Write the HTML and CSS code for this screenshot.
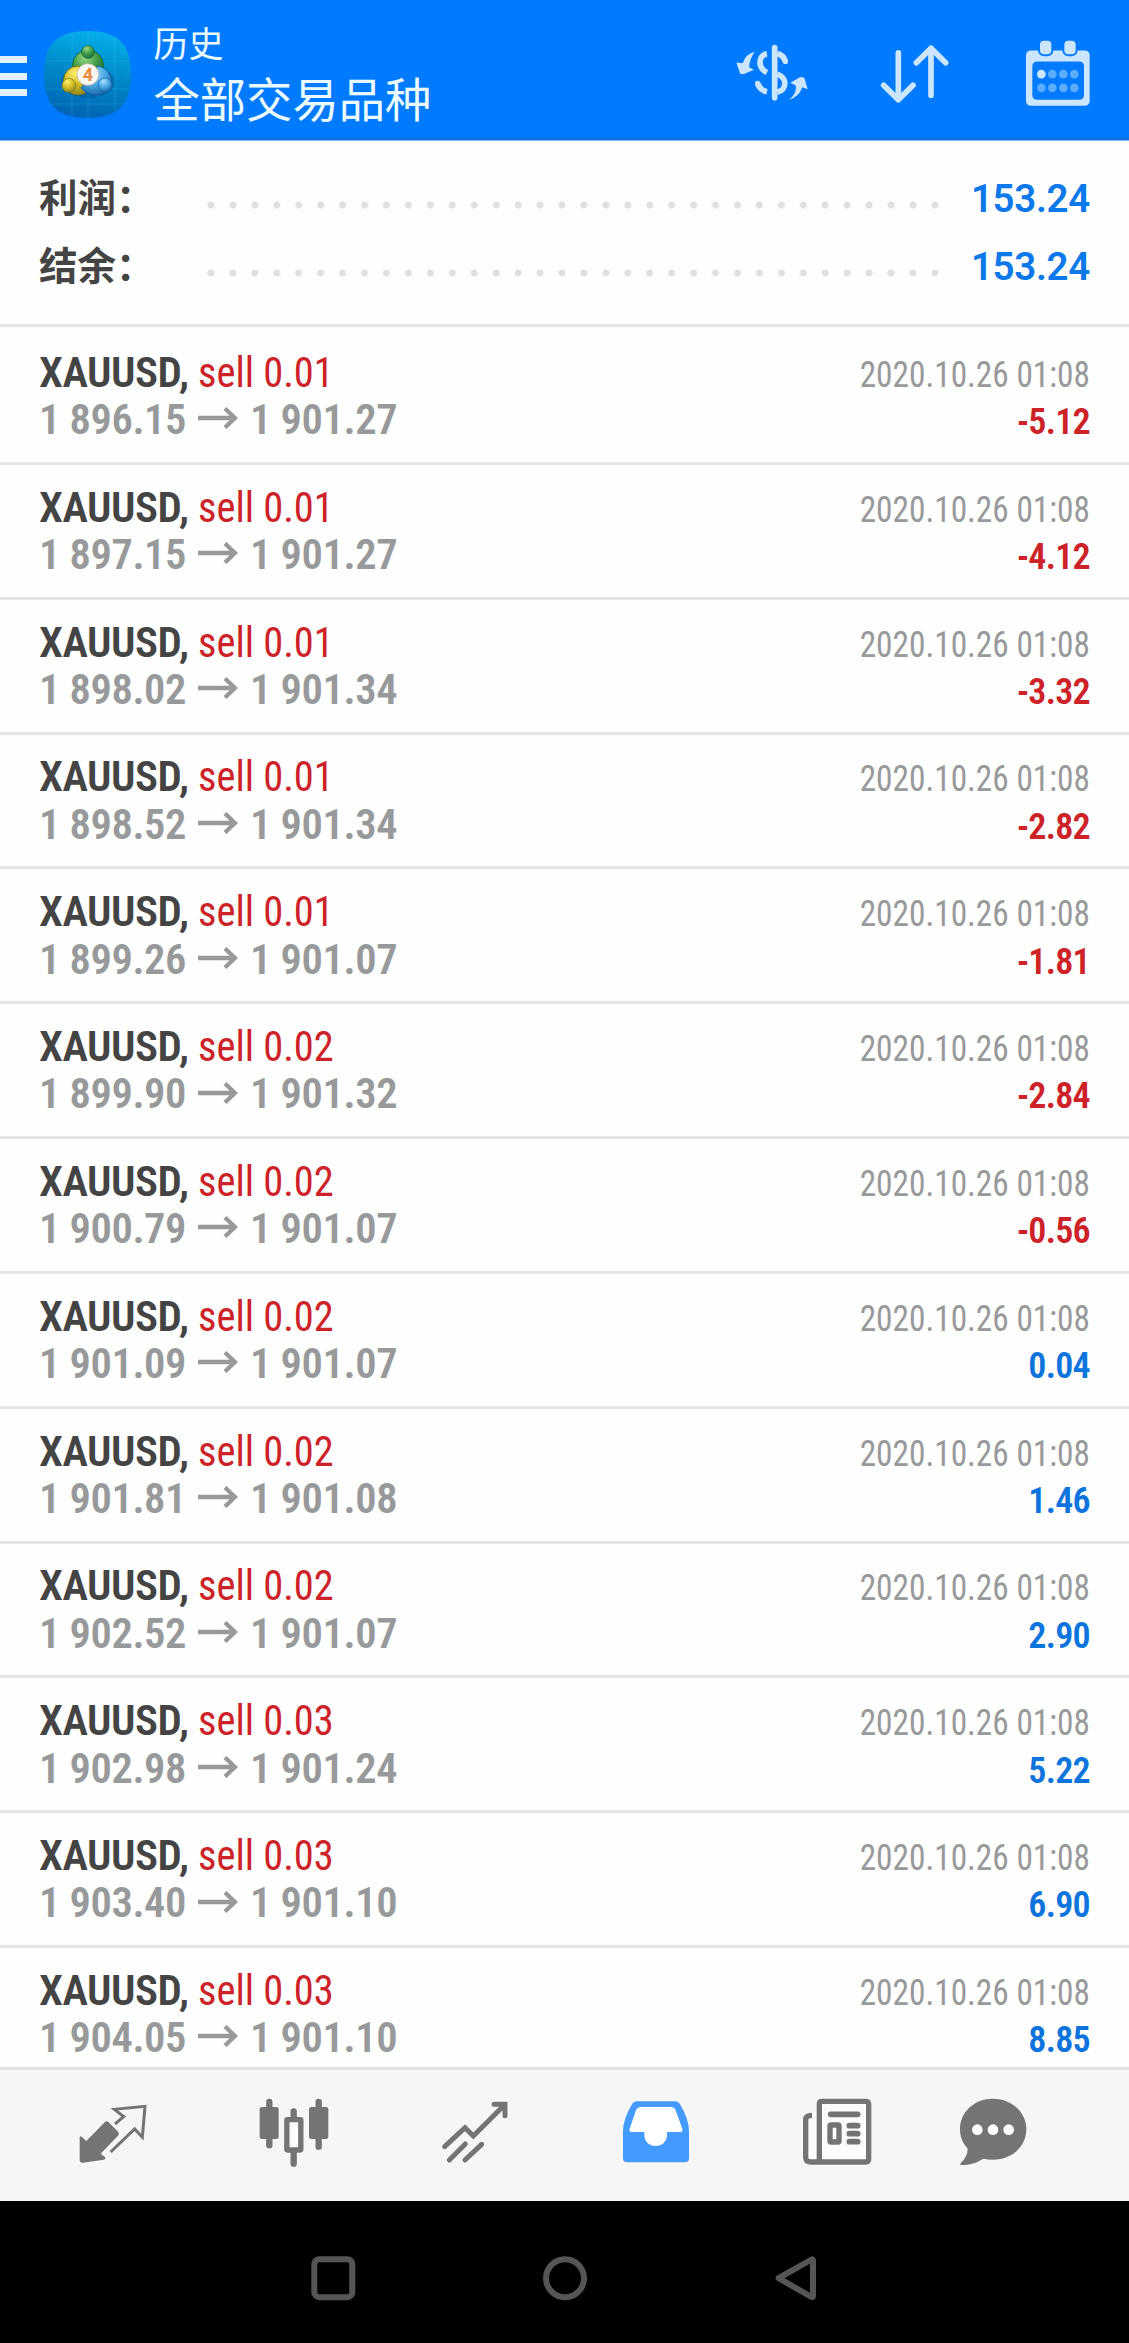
FILE: index.html
```html
<!DOCTYPE html>
<html lang="zh-CN">
<head>
<meta charset="utf-8">
<title>历史</title>
<link rel="stylesheet" href="styles.css">
</head>
<body>
<svg class="defs" aria-hidden="true">
  <symbol id="arrow" viewBox="0 0 40 22">
    <path d="M0 11H37M27 1.500l10 9.500-10 9.500" fill="none" stroke="currentColor" stroke-width="4.300"/>
  </symbol>
</svg>

<header class="topbar">
  <div class="burger"><i></i><i></i><i></i></div>
  <svg class="logo" viewBox="0 0 87 87">
    <defs>
      <linearGradient id="bg" x1="0.6" y1="0" x2="0.4" y2="1">
        <stop offset="0" stop-color="#05aeea"/><stop offset="0.5" stop-color="#0088c9"/><stop offset="1" stop-color="#0062b4"/>
      </linearGradient>
      <radialGradient id="green" cx="0.4" cy="0.25" r="0.8"><stop offset="0" stop-color="#9bd884"/><stop offset="0.5" stop-color="#3f9b45"/><stop offset="1" stop-color="#176a3a"/></radialGradient>
      <radialGradient id="gold" cx="0.4" cy="0.25" r="0.8"><stop offset="0" stop-color="#fff06d"/><stop offset="0.5" stop-color="#d1bd27"/><stop offset="1" stop-color="#87811c"/></radialGradient>
      <radialGradient id="sky" cx="0.4" cy="0.25" r="0.8"><stop offset="0" stop-color="#a8e2ff"/><stop offset="0.5" stop-color="#4aa8e2"/><stop offset="1" stop-color="#1264a8"/></radialGradient>
    </defs>
    <path d="M43.500 0C74 0 87 13 87 43.500S74 87 43.500 87 0 74 0 43.500 13 0 43.500 0Z" fill="url(#bg)"/>
    <path d="M28 2V85M44 0V87M71 6V80M2 30H85M2 58H85M5 73H81" stroke="#35b9e6" stroke-opacity=".28" stroke-width="1.200"/>
    <ellipse cx="44" cy="51" rx="27" ry="16" fill="#034a80" opacity=".35"/>
    <circle cx="44" cy="34.500" r="15.500" fill="url(#green)" stroke="#17663a"/>
    <circle cx="34" cy="49.500" r="14.500" fill="url(#gold)" stroke="#76721d"/>
    <path d="M54 35C65 37 70 48 66 57 61 67 45 66 37 57L46 46Z" fill="url(#sky)" stroke="#0f5f9d"/>
    <circle cx="44" cy="21" r="6.500" fill="url(#green)" stroke="#17663a" stroke-width=".6"/>
    <circle cx="25" cy="54.500" r="7" fill="url(#gold)" stroke="#76721d" stroke-width=".6"/>
    <circle cx="61" cy="54" r="7" fill="url(#sky)" stroke="#0f5f9d" stroke-width=".6"/>
    <circle cx="43.800" cy="43.500" r="10.800" fill="#fbf7f2" stroke="#c8b8a5" stroke-width=".8"/>
    <text x="43.800" y="50" class="logo-num">4</text>
  </svg>
  <div class="titles">
    <div class="title-small">历史</div>
    <div class="title-main">全部交易品种</div>
  </div>
  <div class="actions">
    <svg viewBox="97 112 240 215">
      <path d="M225 143V294" stroke-width="17" stroke-linecap="round"/>
      <path d="M202 162C174 166 174 205 202 218M233 161Q253 167 257 185M174 251Q181 271 202 276M233 223C263 232 263 271 233 277" stroke-width="17"/>
      <circle class="solid" cx="257" cy="185" r="8"/><circle class="solid" cx="174" cy="251" r="8"/>
      <path class="solid" d="M165 156Q139 162 129 190L110 188 121 220Q126 225 135 222L163 210 148 202Q150 178 165 156ZM268 300Q293 280 288 257L272 249 301 232Q312 230 315 237L324 268 308 262Q298 291 268 300Z"/>
    </svg>
    <svg viewBox="526 112 240 215">
      <path d="M596 159V300M552 256L596 300 640 256M694 286V145M650 189L694 145 738 189" stroke-width="17" stroke-linecap="round" stroke-linejoin="round"/>
    </svg>
    <svg viewBox="955 112 240 215">
      <path class="solid" fill-rule="evenodd" d="M995 152H1154Q1170 152 1170 168V302Q1170 318 1154 318H995Q979 318 979 302V168Q979 152 995 152ZM1013 185Q998 185 998 200V285Q998 300 1013 300H1138Q1153 300 1153 285V200Q1153 185 1138 185Z"/>
      <rect class="ring" x="1018" y="120" width="40" height="46" rx="15"/><rect class="ring" x="1091" y="120" width="40" height="46" rx="15"/>
      <circle class="solid" cx="1025" cy="223" r="13"/>
      <g class="faint"><circle cx="1058" cy="223" r="13"/><circle cx="1091" cy="223" r="13"/><circle cx="1124" cy="223" r="13"/><circle cx="1025" cy="264" r="13"/><circle cx="1058" cy="264" r="13"/><circle cx="1091" cy="264" r="13"/><circle cx="1124" cy="264" r="13"/></g>
    </svg>
  </div>
</header>

<main class="content">
  <section class="summary">
    <div class="sum-row"><span class="sum-label">利润：</span><span class="dots"></span><span class="sum-value">153.24</span></div>
    <div class="sum-row"><span class="sum-label">结余：</span><span class="dots"></span><span class="sum-value">153.24</span></div>
  </section>
  <section class="deals">
    <div class="deal"><div class="name"><b>XAUUSD,</b> <span>sell 0.01</span></div><div class="time">2020.10.26 01:08</div><div class="price"><span>1 896.15</span><svg><use href="#arrow"/></svg><span>1 901.27</span></div><div class="profit loss">-5.12</div></div>
    <div class="deal"><div class="name"><b>XAUUSD,</b> <span>sell 0.01</span></div><div class="time">2020.10.26 01:08</div><div class="price"><span>1 897.15</span><svg><use href="#arrow"/></svg><span>1 901.27</span></div><div class="profit loss">-4.12</div></div>
    <div class="deal"><div class="name"><b>XAUUSD,</b> <span>sell 0.01</span></div><div class="time">2020.10.26 01:08</div><div class="price"><span>1 898.02</span><svg><use href="#arrow"/></svg><span>1 901.34</span></div><div class="profit loss">-3.32</div></div>
    <div class="deal"><div class="name"><b>XAUUSD,</b> <span>sell 0.01</span></div><div class="time">2020.10.26 01:08</div><div class="price"><span>1 898.52</span><svg><use href="#arrow"/></svg><span>1 901.34</span></div><div class="profit loss">-2.82</div></div>
    <div class="deal"><div class="name"><b>XAUUSD,</b> <span>sell 0.01</span></div><div class="time">2020.10.26 01:08</div><div class="price"><span>1 899.26</span><svg><use href="#arrow"/></svg><span>1 901.07</span></div><div class="profit loss">-1.81</div></div>
    <div class="deal"><div class="name"><b>XAUUSD,</b> <span>sell 0.02</span></div><div class="time">2020.10.26 01:08</div><div class="price"><span>1 899.90</span><svg><use href="#arrow"/></svg><span>1 901.32</span></div><div class="profit loss">-2.84</div></div>
    <div class="deal"><div class="name"><b>XAUUSD,</b> <span>sell 0.02</span></div><div class="time">2020.10.26 01:08</div><div class="price"><span>1 900.79</span><svg><use href="#arrow"/></svg><span>1 901.07</span></div><div class="profit loss">-0.56</div></div>
    <div class="deal"><div class="name"><b>XAUUSD,</b> <span>sell 0.02</span></div><div class="time">2020.10.26 01:08</div><div class="price"><span>1 901.09</span><svg><use href="#arrow"/></svg><span>1 901.07</span></div><div class="profit">0.04</div></div>
    <div class="deal"><div class="name"><b>XAUUSD,</b> <span>sell 0.02</span></div><div class="time">2020.10.26 01:08</div><div class="price"><span>1 901.81</span><svg><use href="#arrow"/></svg><span>1 901.08</span></div><div class="profit">1.46</div></div>
    <div class="deal"><div class="name"><b>XAUUSD,</b> <span>sell 0.02</span></div><div class="time">2020.10.26 01:08</div><div class="price"><span>1 902.52</span><svg><use href="#arrow"/></svg><span>1 901.07</span></div><div class="profit">2.90</div></div>
    <div class="deal"><div class="name"><b>XAUUSD,</b> <span>sell 0.03</span></div><div class="time">2020.10.26 01:08</div><div class="price"><span>1 902.98</span><svg><use href="#arrow"/></svg><span>1 901.24</span></div><div class="profit">5.22</div></div>
    <div class="deal"><div class="name"><b>XAUUSD,</b> <span>sell 0.03</span></div><div class="time">2020.10.26 01:08</div><div class="price"><span>1 903.40</span><svg><use href="#arrow"/></svg><span>1 901.10</span></div><div class="profit">6.90</div></div>
    <div class="deal"><div class="name"><b>XAUUSD,</b> <span>sell 0.03</span></div><div class="time">2020.10.26 01:08</div><div class="price"><span>1 904.05</span><svg><use href="#arrow"/></svg><span>1 901.10</span></div><div class="profit">8.85</div></div>
  </section>
</main>

<nav class="tabs">
  <svg viewBox="233 144 210 210">
    <path class="solid" d="M238 262Q239 256 244 260L258 273 313 217Q319 211 325 217L354 246Q358 252 353 257L301 311 314 321Q318 327 310 329L248 338Q238 339 238 329Z"/>
    <path d="M344 222L370 200 342 178 434 169 426 262 403 237 331 306" stroke-width="9"/>
  </svg>
  <svg viewBox="775 144 210 210">
    <path d="M806 156V286M954 156V290M879 184V205M879 305V341" stroke-width="19" stroke-linecap="round"/>
    <rect class="solid" x="777" y="171" width="57" height="96" rx="7"/><rect class="solid" x="925" y="171" width="58" height="96" rx="7"/>
    <rect class="hollow" x="858.500" y="209" width="42" height="91" rx="2" stroke-width="16"/>
  </svg>
  <svg viewBox="178 144 210 210">
    <path d="M192 290L253 233 278 258 372 164M340 163H373V197M206 330L254 282M253 330L303 283" stroke-width="15" stroke-linecap="round"/>
  </svg>
  <svg class="active" viewBox="723 144 210 210">
    <path class="solid" d="M771 154H885Q895 154 900 163Q927 207 927 244V325Q927 337 914 337H742Q729 337 729 325V244Q729 207 756 163Q761 154 771 154Z"/>
    <path class="paper" d="M783 171H872Q883 171 887 181L907 236Q909 246 900 246H861V254C861 299 793 299 793 254V246H756Q747 246 749 236L768 181Q773 171 783 171Z"/>
  </svg>
  <svg viewBox="127 144 210 210">
    <path class="hollow" d="M179 162Q179 154 187 154H318Q327 154 327 163V327Q327 336 318 336H152Q138 336 138 322V209Q138 196 157 196M179 160V336" stroke-width="16"/>
    <path d="M213 193H294M269 227H294M269 251H294M269 275H294" stroke-width="17" stroke-linecap="round"/>
    <rect x="211" y="225" width="27" height="51" rx="3" stroke-width="16"/>
  </svg>
  <svg viewBox="595 144 210 210">
    <path class="solid" d="M700 146C756 146 800 186 800 238S756 329 700 329Q684 329 671 326Q637 347 604 345Q600 343 604 338Q624 319 624 296C608 278 601 259 601 238 601 186 644 146 700 146Z"/>
    <g class="paper"><circle cx="653" cy="239" r="16"/><circle cx="700" cy="239" r="16"/><circle cx="747" cy="239" r="16"/></g>
  </svg>
</nav>

<footer class="system">
  <svg viewBox="0 0 46 46"><rect x="4.300" y="4.200" width="38" height="38" rx="5"/></svg>
  <svg viewBox="0 0 46 46"><circle cx="23" cy="23.200" r="19"/></svg>
  <svg viewBox="0 0 46 46"><path d="M4.600 23.200L37.500 4.500Q39 4 39 5.500V41Q39 42.500 37.500 42Z"/></svg>
</footer>
</body>
</html>
```
FILE: styles.css
```css
* { box-sizing: border-box; }
body {
  margin: 0;
  height: 2343px;
  display: flex;
  flex-direction: column;
  overflow: hidden;
  background: #fefefe;
  font-family: Roboto, "Noto Sans CJK SC", sans-serif;
}
svg { display: block; fill: none; overflow: visible; flex: none; }
.defs { width: 0; height: 0; position: absolute; }

/* Top bar */
.topbar {
  height: 141px;
  flex: none;
  display: flex;
  background: #007aff;
  border-bottom: 1px solid #7dbcf6;
  box-shadow: inset 0 -2px #0f70da;
  color: #ebfaff;
}
.burger { width: 27px; padding-top: 56px; display: flex; flex-direction: column; gap: 9.300px; }
.burger i { height: 7.300px; background: #e2f2ff; }
.logo { width: 87px; height: 87px; margin: 31px 0 0 17px; }
.logo-num { font: bold 18px Roboto, sans-serif; fill: #e98a3c; text-anchor: middle; }
.titles { margin-left: 22.500px; padding-top: 18px; font-family: "Noto Sans CJK SC", sans-serif; white-space: nowrap; }
.title-small { font-size: 35px; line-height: 48px; }
.title-main { font-size: 46.300px; line-height: 61px; }
.actions { margin-left: auto; padding: 37px 31px 0 0; display: flex; gap: 63px; }
.actions svg { width: 80px; height: 72px; stroke: #cde6ff; }
.actions .solid { fill: #cde6ff; stroke: none; }
.actions .ring { fill: #cde6ff; stroke: #007aff; stroke-width: 6; }
.actions .faint { fill: #5cadff; stroke: none; }

/* Account summary */
.content { flex: 1; min-height: 0; overflow: hidden; }
.summary { height: 186px; padding: 22px 39px 0; border-bottom: 3px solid #e5e5e5; }
.sum-row { height: 68.300px; display: flex; align-items: center; }
.sum-label { width: 161px; flex: none; padding-bottom: 4px; font: 700 38.500px "Noto Sans CJK SC", sans-serif; color: #444; white-space: nowrap; }
.dots {
  width: 746.300px;
  height: 8px;
  margin-top: 15px;
  background: radial-gradient(circle at center, #e0e0e0 3px, transparent 4px) 0 0 / 21.950px 8px repeat-x;
}
.sum-value { margin-left: auto; padding-top: 2px; font-size: 38.500px; font-weight: 600; letter-spacing: -0.300px; color: #0c79ea; }

/* Deals */
.deals { padding-top: 3px; }
.deal {
  height: 134.850px;
  padding: 18.900px 39px 0;
  display: grid;
  grid-template-columns: 1fr auto;
  grid-template-rows: 47.300px 47.300px;
  align-items: baseline;
  border-bottom: 3px solid #e5e5e5;
  font-stretch: 75%;
  line-height: 47.300px;
  white-space: nowrap;
}
.name { font-size: 43px; color: #cc2228; }
.name b { font-weight: 600; letter-spacing: -0.500px; color: #444; }
.name span { display: inline-block; transform: scaleX(.94); transform-origin: left; }
.time { font-size: 36px; color: #98999b; transform: scaleX(.925); transform-origin: right; }
.price { display: flex; align-items: baseline; font-size: 42.500px; font-weight: 600; letter-spacing: -0.380px; color: #98999b; }
.price svg { width: 40px; height: 22px; margin: 0 12px 3px; align-self: center; }
.profit { font-size: 36px; font-weight: 600; letter-spacing: -0.700px; color: #0c74dc; text-align: right; }
.profit.loss { color: #cc2228; }

/* Tab bar */
.tabs {
  height: 134px;
  flex: none;
  display: flex;
  gap: 111px;
  padding: 28px 0 0 77.500px;
  background: #f6f6f6;
  border-top: 3px solid #e2e2e2;
}
.tabs svg { width: 70px; height: 70px; stroke: #747474; }
.tabs svg:last-child { margin-left: -25px; }
.tabs .solid { fill: #747474; stroke: none; }
.tabs .hollow { fill: #fcfcfc; }
.tabs .paper { fill: #fff; stroke: none; }
.tabs .active .solid { fill: #449bff; }

/* System navigation */
.system {
  height: 142px;
  flex: none;
  display: flex;
  gap: 186.200px;
  padding: 54px 0 0 309.600px;
  background: #000;
}
.system svg { width: 46px; height: 46px; stroke: #555; stroke-width: 6; stroke-linejoin: round; }
```
